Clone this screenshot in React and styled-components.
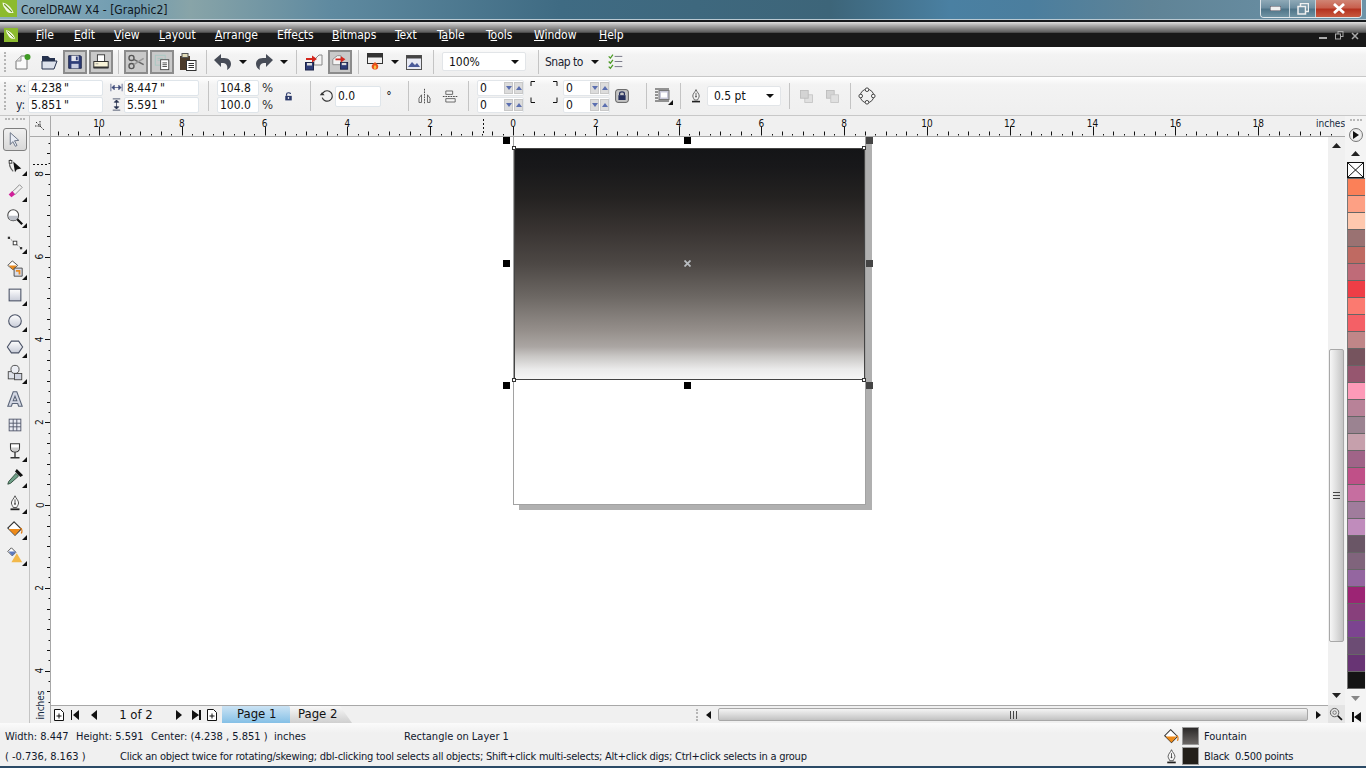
import React from "react";
import styled, { createGlobalStyle } from "styled-components";

const GlobalStyle = createGlobalStyle`
  html, body { margin: 0; padding: 0; background: #f0f0f0; overflow: hidden; }
  body { font-family: "DejaVu Sans Condensed", "DejaVu Sans", sans-serif; font-stretch: condensed; font-size: 11px; color: #111; }
`;

const Window = styled.div`
  width: 1366px;
  height: 768px;
  display: flex;
  flex-direction: column;
  overflow: hidden;
  background: #f0f0f0;
`;

const TitleBar = styled.div`
  height: 22px;
  flex: none;
  box-sizing: border-box;
  display: flex;
  align-items: flex-start;
  border-bottom: 2px solid #16191c;
  background: linear-gradient(90deg, #8fb0bd 0, #6f9bb0 130px, #88a4a8 190px, #5f8aa0 330px, #3f6b83 560px, #3d6579 830px, #4a80a2 950px, #4b7e9e 1030px, #5f8396 1150px, #6d93a8 1366px);
  box-shadow: inset 0 -1px 0 #b9c9d2;
`;

const TitleText = styled.span`
  font-size: 12px;
  line-height: 20px;
  margin-left: 4px;
  color: #10161c;
`;

const Caption = styled.div`
  margin-left: auto;
  margin-right: 4px;
  display: flex;
  height: 18px;
  border: 1px solid #dfe6ea;
  border-top: none;
  border-radius: 0 0 4px 4px;
  overflow: hidden;
  box-sizing: border-box;
`;

const CaptionBtn = styled.div`
  width: ${(p) => p.$w}px;
  box-sizing: border-box;
  display: flex;
  align-items: center;
  justify-content: center;
  border-left: ${(p) => (p.$first ? "none" : "1px solid #c4d2da")};
  background: ${(p) =>
    p.$close
      ? "linear-gradient(180deg, #d08474 0, #c8604e 45%, #b53320 55%, #c85a40 100%)"
      : "linear-gradient(180deg, #8fa9b7 0, #6d8ea0 45%, #4f7488 55%, #6f93a3 100%)"};
`;

const MenuBar = styled.div`
  height: 25px;
  flex: none;
  display: flex;
  align-items: center;
  padding: 0 0 0 4px;
  background: linear-gradient(180deg, #e0e0e0 0, #a6a6a6 4px, #5e5e5e 10px, #3a3a3a 11px, #181818 11.5px, #181818 100%);
`;

const MenuList = styled.div`
  display: flex;
  margin-left: 18px;
`;

const MenuItem = styled.span`
  flex: none;
  width: ${(p) => p.$w}px;
  color: #fff;
  font-size: 12px;
  line-height: 24px;
  u { text-underline-offset: 1px; }
`;

const DocControls = styled.div`
  margin-left: auto;
  margin-right: 6px;
  display: flex;
  gap: 7px;
  padding-top: 1px;
`;

const ToolbarRow = styled.div`
  flex: none;
  display: flex;
  align-items: center;
  box-sizing: border-box;
  height: ${(p) => p.$h}px;
  border-bottom: 1px solid #c8c8c8;
  background: linear-gradient(180deg, #ffffff 0, #f3f3f3 8px, #efefef 100%);
`;

const Grip = styled.div`
  flex: none;
  width: 2px;
  height: ${(p) => p.$h || 20}px;
  margin-left: 4px;
  border-left: 2px dotted #b5b5b5;
`;

const Tool = styled.div`
  flex: none;
  width: ${(p) => p.$w || 24}px;
  height: 24px;
  box-sizing: border-box;
  margin-left: ${(p) => p.$ml || 0}px;
  display: flex;
  align-items: center;
  justify-content: center;
  border: 2px solid ${(p) => (p.$on ? "#8c8c8c" : "transparent")};
  background: ${(p) => (p.$on ? "#c9c9c9" : "transparent")};
`;

const DropArrow = styled.div`
  flex: none;
  margin-left: ${(p) => p.$ml || 0}px;
  width: 0;
  height: 0;
  border-left: 4px solid transparent;
  border-right: 4px solid transparent;
  border-top: 4px solid #111;
`;

const Sep = styled.div`
  flex: none;
  width: 1px;
  height: ${(p) => p.$h || 24}px;
  margin-left: ${(p) => p.$l}px;
  margin-right: ${(p) => p.$r}px;
  background: #c4c4c4;
`;

const Combo = styled.div`
  flex: none;
  width: ${(p) => p.$w}px;
  height: ${(p) => p.$hh || 19}px;
  margin-left: ${(p) => p.$ml || 0}px;
  box-sizing: border-box;
  padding: 0 6px;
  display: flex;
  align-items: center;
  justify-content: space-between;
  background: #fff;
  border: 1px solid #e2e5e8;
  border-radius: 2px;
  font-size: 12px;
`;

const SnapLabel = styled.span`
  font-size: 12px;
  letter-spacing: -0.5px;
  color: #1a2230;
`;

const Stack = styled.div`
  flex: none;
  display: flex;
  flex-direction: column;
  gap: 1px;
  margin-left: ${(p) => p.$ml || 0}px;
`;

const Labeled = styled.div`
  display: flex;
  align-items: center;
  height: 16px;
`;

const AxisLabel = styled.span`
  width: ${(p) => p.$w}px;
  font-size: 12px;
  color: #1b2b44;
`;

const Field = styled.div`
  flex: none;
  width: ${(p) => p.$w}px;
  height: ${(p) => p.$hh || 16}px;
  box-sizing: border-box;
  padding-left: 2px;
  background: #fff;
  border: 1px solid #dfe5ea;
  border-radius: 2px;
  font-size: 12px;
  line-height: ${(p) => (p.$hh || 16) - 2}px;
  color: #111;
`;

const SpinField = styled.div`
  width: 47px;
  height: 16px;
  box-sizing: border-box;
  display: flex;
  align-items: center;
  padding-left: 2px;
  background: #fff;
  border: 1px solid #e2e6ea;
  border-radius: 2px;
  font-size: 12px;
`;

const SpinValue = styled.span`
  flex: 1;
`;

const Spin = styled.span`
  width: 9px;
  height: 12px;
  margin-left: 1px;
  display: flex;
  align-items: center;
  justify-content: center;
  background: #dcdcdc;
  border: 1px solid #c8c8c8;
  box-sizing: border-box;
`;

const Tri = styled.span`
  width: 0;
  height: 0;
  border-left: 3px solid transparent;
  border-right: 3px solid transparent;
  ${(p) => (p.$up ? "border-bottom: 4px solid #5b6fb0;" : "border-top: 4px solid #5b6fb0;")}
`;

const PercentStack = styled.div`
  flex: none;
  display: flex;
  flex-direction: column;
  gap: 1px;
  margin-left: 3px;
  width: 12px;
  font-size: 13px;
  line-height: 16px;
  color: #333;
`;

const Slot = styled.div`
  flex: none;
  width: ${(p) => p.$w}px;
  margin-left: ${(p) => p.$ml || 0}px;
  display: flex;
  align-items: center;
  justify-content: center;
  font-size: 12px;
`;

const Workspace = styled.div`
  flex: 1;
  min-height: 0;
  display: grid;
  grid-template-columns: 30px 21px 1277px 17px 21px;
  grid-template-rows: 21px 568px 18px;
`;

const Toolbox = styled.div`
  grid-column: 1;
  grid-row: 1 / 4;
  display: flex;
  flex-direction: column;
  align-items: center;
  border-right: 1px solid #c4c4c4;
  background: #f0f0f0;
`;

const ToolGrip = styled.div`
  width: 20px;
  height: 2px;
  margin: 2px 0 6px;
  border-top: 2px dotted #b8b8b8;
`;

const ToolSlot = styled.div`
  position: relative;
  width: 24px;
  height: ${(p) => (p.$on ? 23 : 26)}px;
  flex: none;
  box-sizing: border-box;
  display: flex;
  align-items: center;
  justify-content: center;
  margin-bottom: ${(p) => (p.$on ? 1 : 0)}px;
  border: ${(p) => (p.$on ? "1px solid #7f7f7f" : "none")};
  border-radius: 3px;
  background: ${(p) => (p.$on ? "linear-gradient(180deg, #f0f0f0, #d8d8d8)" : "none")};
  ${(p) =>
    p.$more &&
    `&::after {
      content: "";
      position: absolute;
      right: 0;
      bottom: 2px;
      border-left: 5px solid transparent;
      border-bottom: 5px solid #111;
    }`}
`;

const RulerCorner = styled.div`
  grid-column: 2;
  grid-row: 1;
  display: flex;
  align-items: flex-end;
  justify-content: flex-end;
  padding: 0 2px 2px 0;
  border-right: 1px solid #aaa;
  border-bottom: 1px solid #aaa;
  box-sizing: border-box;
  background: #f0f0f0;
`;

const HRuler = styled.div`
  grid-column: 3 / 5;
  grid-row: 1;
  background: #f0f0f0;
  overflow: hidden;
  svg { display: block; }
`;

const VRuler = styled.div`
  grid-column: 2;
  grid-row: 2 / 4;
  background: #f0f0f0;
  overflow: hidden;
  svg { display: block; }
`;

const Canvas = styled.div`
  grid-column: 3;
  grid-row: 2;
  position: relative;
  overflow: hidden;
  background: #fff;
`;

const Page = styled.div`
  position: absolute;
  left: 462px;
  top: -100px;
  width: 353px;
  height: 468px;
  box-sizing: border-box;
  background: #fff;
  border: 1px solid #a2a2a2;
  box-shadow: 6px 5px 0 #b0b0b0;
`;

const Shape = styled.div`
  position: absolute;
  left: 463px;
  top: 11px;
  width: 351px;
  height: 232px;
  box-sizing: border-box;
  border: 1px solid #444;
  background: linear-gradient(180deg, #141517 0, #18181a 8%, #242221 21%, #383331 35%, #4d4845 50%, #6c6763 64%, #958f8b 79%, #aba6a3 86%, #c8c6c4 90%, #ececec 96%, #f6f6f6 100%);
`;

const Handle = styled.div`
  position: absolute;
  left: ${(p) => p.$x}px;
  top: ${(p) => p.$y}px;
  width: 7px;
  height: 7px;
  background: ${(p) => (p.$dim ? "#454545" : "#000")};
`;

const Node = styled.div`
  position: absolute;
  left: ${(p) => p.$x}px;
  top: ${(p) => p.$y}px;
  width: 2px;
  height: 2px;
  border: 1px solid #333;
  background: #fff;
`;

const CenterMark = styled.svg`
  position: absolute;
  left: 633px;
  top: 123px;
`;

const VScroll = styled.div`
  grid-column: 4;
  grid-row: 2;
  display: flex;
  flex-direction: column;
  align-items: center;
  background: #f0f0f0;
`;

const ScrollBtn = styled.div`
  flex: none;
  box-sizing: border-box;
  height: ${(p) => p.$h}px;
  padding-top: ${(p) => p.$pt}px;
  width: 100%;
  display: flex;
  align-items: flex-start;
  justify-content: center;
  svg { display: block; }
`;

const ThumbV = styled.div`
  flex: none;
  width: 15px;
  height: 293px;
  margin-right: 1px;
  box-sizing: border-box;
  display: flex;
  align-items: center;
  justify-content: center;
  border: 1px solid #a8a8a8;
  border-radius: 2px;
  background: linear-gradient(90deg, #f6f6f6, #e0e0e0 45%, #c4c4c4);
`;

const Palette = styled.div`
  grid-column: 5;
  grid-row: 1 / 4;
  display: flex;
  flex-direction: column;
  align-items: center;
  background: #f4f4f4;
`;

const PaletteGrip = styled.div`
  flex: none;
  width: 12px;
  height: 2px;
  margin: 3px 0 5px;
  border-top: 2px dotted #b8b8b8;
`;

const PlayBtn = styled.div`
  flex: none;
  width: 14px;
  height: 14px;
  margin-bottom: 3px;
  box-sizing: border-box;
  display: flex;
  align-items: center;
  justify-content: center;
  border: 1px solid #777;
  border-radius: 50%;
  background: radial-gradient(circle, #fff, #ddd);
`;

const PaletteArrow = styled.div`
  flex: none;
  height: ${(p) => p.$h}px;
  display: flex;
  align-items: center;
  justify-content: center;
`;

const NoColor = styled.div`
  flex: none;
  width: 17px;
  height: 16px;
  box-sizing: border-box;
  border: 1px solid #111;
  background: #fff;
  svg { display: block; }
`;

const Swatches = styled.div`
  flex: none;
  width: 18px;
  display: flex;
  flex-direction: column;
  border-top: 1px solid #666;
`;

const Swatch = styled.div`
  height: 16px;
  border-bottom: 1px solid #666;
  border-left: 1px solid #777;
  background: ${(p) => p.$c};
`;

const PageBar = styled.div`
  grid-column: 3;
  grid-row: 3;
  display: flex;
  align-items: center;
  border-top: 1px solid #a8a8a8;
  box-sizing: border-box;
  background: #f0f0f0;
`;

const NavIcon = styled.div`
  flex: none;
  width: ${(p) => p.$w}px;
  margin-left: ${(p) => p.$ml || 0}px;
  display: flex;
  align-items: center;
  justify-content: center;
`;

const PageCount = styled.span`
  flex: none;
  width: 64px;
  text-align: center;
  font-size: 13px;
`;

const PageTab = styled.div`
  flex: none;
  height: 17px;
  width: ${(p) => p.$w}px;
  margin-left: ${(p) => p.$ml || 0}px;
  box-sizing: border-box;
  padding-left: ${(p) => p.$pad}px;
  font-size: 13px;
  line-height: 16px;
  clip-path: polygon(0 0, calc(100% - 12px) 0, 100% 100%, 0 100%);
  background: ${(p) =>
    p.$active
      ? "linear-gradient(180deg, #cbe3f4, #85c0e6)"
      : "linear-gradient(180deg, #f8f8f8, #cfcfcf)"};
`;

const HScroll = styled.div`
  margin-left: auto;
  flex: none;
  width: 636px;
  height: 100%;
  display: flex;
  align-items: center;
`;

const ThumbH = styled.div`
  flex: none;
  width: 590px;
  height: 13px;
  margin-left: 2px;
  box-sizing: border-box;
  display: flex;
  align-items: center;
  justify-content: center;
  border: 1px solid #a8a8a8;
  border-radius: 2px;
  background: linear-gradient(180deg, #f4f4f4, #dcdcdc 50%, #c2c2c2);
`;

const ZoomCell = styled.div`
  grid-column: 4;
  grid-row: 3;
  display: flex;
  align-items: center;
  justify-content: center;
  padding-right: 2px;
  background: #e4e4e4;
`;

const StatusBar = styled.div`
  flex: none;
  height: 45px;
  box-sizing: border-box;
  display: flex;
  flex-direction: column;
  padding-top: 3px;
  border-bottom: 2px solid #2b4a66;
  background: linear-gradient(180deg, #fbfbfb, #f0f0f0 10px);
`;

const StatusRow = styled.div`
  height: 20px;
  display: flex;
  align-items: center;
  padding-left: 5px;
  font-size: 11px;
  color: #10182c;
`;

const StatusCell = styled.span`
  flex: none;
  width: ${(p) => p.$w}px;
  white-space: nowrap;
`;

const HintText = styled.span`
  white-space: nowrap;
  letter-spacing: -0.25px;
`;

const Legend = styled.div`
  margin-left: auto;
  width: 203px;
  display: flex;
  align-items: center;
  gap: 2px;
`;

const LegendSwatch = styled.div`
  flex: none;
  width: 17px;
  height: 18px;
  margin-right: 3px;
  box-sizing: border-box;
  border: 1px solid #9a9a9a;
  background: ${(p) => p.$bg};
`;

const LegendText = styled.span`
  white-space: pre;
  letter-spacing: ${(p) => p.$track || 0}px;
`;

const Svg = ({ size = 20, children }) => (
  <svg width={size} height={size} viewBox="0 0 20 20" style={{ flex: "none" }}>
    {children}
  </svg>
);

const logo = (
  <>
    <rect width="20" height="20" fill="#8cbb2e" />
    <path d="M3 3c5 1 10 5 13 12-4 1-7 0-9-3-2-3-4-5-4-9z" fill="#f4f8e4" />
    <path d="M5 5l9 9" stroke="#6a9a20" strokeWidth="1.4" />
  </>
);

const nib = (
  <>
    <path d="M10 2c-1 3-4 5-4 8 0 2 2 4 2 5h4c0-1 2-3 2-5 0-3-3-5-4-8z" fill="#f6f6f6" stroke="#444" />
    <path d="M10 6v5" stroke="#444" />
    <circle cx="10" cy="11" r="1" fill="#444" />
    <rect x="5" y="16" width="10" height="2" fill="#222" />
  </>
);

const bucket = (
  <>
    <path d="M9 2l8 8-7 7-8-8z" fill="#fff" stroke="#333" strokeWidth="1.2" />
    <path d="M3 10h13l-6 7z" fill="#ee8a18" />
    <path d="M16 9c2 1 2 4 1 6" stroke="#e07a10" strokeWidth="1.5" fill="none" />
  </>
);

const icons = {
  newDoc: (
    <>
      <path d="M3 9l5-5h6v13H3z" fill="#fafafa" stroke="#777" />
      <path d="M3 9h5V4" fill="#ddd" stroke="#999" />
      <circle cx="14.5" cy="5" r="3" fill="#3f9a24" />
    </>
  ),
  open: (
    <>
      <path d="M3 4h6l2 2h5v5H3z" fill="#26324e" />
      <path d="M3 9h15l-3 8H3z" fill="#dde2ec" stroke="#26324e" />
    </>
  ),
  save: (
    <>
      <path d="M3 3h13l1 1v13H3z" fill="#2e3d78" stroke="#1c2448" />
      <rect x="6" y="3" width="8" height="6" fill="#e6e6ee" />
      <rect x="6" y="12" width="8" height="5" fill="#c8cce0" />
      <rect x="11" y="4" width="2" height="4" fill="#2e3d78" />
    </>
  ),
  print: (
    <>
      <rect x="6" y="2" width="8" height="8" fill="#fff" stroke="#333" />
      <rect x="2" y="9.500" width="16" height="7" fill="#f8f3d8" stroke="#222" />
      <rect x="2" y="15" width="16" height="2" fill="#333" />
      <rect x="4" y="11.500" width="3" height="1" fill="#999" />
    </>
  ),
  cut: (
    <>
      <circle cx="5" cy="5.5" r="2.8" fill="none" stroke="#555" strokeWidth="1.5" />
      <circle cx="5" cy="14.5" r="2.8" fill="none" stroke="#555" strokeWidth="1.5" />
      <path d="M7.5 7l11 6" stroke="#666" strokeWidth="1.7" />
      <path d="M7.5 13l11-7" stroke="#999" strokeWidth="1.7" />
    </>
  ),
  copy: (
    <>
      <rect x="2.5" y="2.5" width="11" height="11" fill="none" stroke="#a6c8c2" />
      <path d="M5 6h6M5 8h5" stroke="#a6c8c2" />
      <rect x="8.5" y="7.5" width="9" height="11" fill="#fff" stroke="#444" />
      <path d="M10.500 11h5M10.500 13h5M10.500 15h5" stroke="#444" />
    </>
  ),
  paste: (
    <>
      <rect x="2" y="4" width="10" height="14" fill="#4a3a2a" />
      <rect x="4" y="1.500" width="6" height="4" fill="#e2dcb8" stroke="#555" />
      <rect x="8.500" y="8.500" width="9.500" height="10" fill="#fff" stroke="#333" />
      <path d="M10.500 11.500h5.500M10.500 13.500h5.500M10.500 15.500h5.500" stroke="#333" />
    </>
  ),
  undo: (
    <path d="M1 8l7-6v4h3c5 0 7 3 7 6 0 3-2 5-4 6 1-3 0-7-4-7H8v4z" fill="#474c57" />
  ),
  redo: (
    <path d="M19 8l-7-6v4H9c-5 0-7 3-7 6 0 3 2 5 4 6-1-3 0-7 4-7h2v4z" fill="#474c57" />
  ),
  importIcon: (
    <>
      <path d="M10 8l5-5h3v10h-8z" fill="#f4f4f4" stroke="#888" />
      <rect x="1.500" y="10.500" width="8" height="7.500" fill="#2e3d78" stroke="#1c2448" />
      <rect x="3" y="11" width="5" height="2.500" fill="#ddd" />
      <path d="M2 6h6V3.500L13 7l-5 3.500V8H2z" fill="#d4261c" />
    </>
  ),
  exportIcon: (
    <>
      <path d="M2 7l5-4h4v10H2z" fill="#f4f4f4" stroke="#888" />
      <rect x="10.500" y="10.500" width="8" height="7.500" fill="#2e3d78" stroke="#1c2448" />
      <rect x="12" y="11" width="5" height="2.500" fill="#ddd" />
      <path d="M5 6h6V3.500L16 7l-5 3.500V8H5z" fill="#d4261c" />
    </>
  ),
  publish: (
    <>
      <rect x="2.500" y="1.500" width="15" height="10" fill="#f0f0f0" stroke="#333" />
      <rect x="2.500" y="1.500" width="15" height="4" fill="#333" />
      <path d="M10 10c2 2 4 3 3 6-1 2-5 2-6 0-1-3 1-4 3-6z" fill="#e8501c" />
      <path d="M10 13c1 1 2 2 1 3.500-1 .8-2 .8-2 0-.5-1.500 0-2.500 1-3.500z" fill="#f8c040" />
    </>
  ),
  launcher: (
    <>
      <rect x="2.500" y="3.500" width="15" height="14" fill="#e8eaf4" stroke="#555" />
      <rect x="2.500" y="3.500" width="15" height="3" fill="#444" />
      <path d="M4 15l4-5 3 3 2-2 3 4z" fill="#4a5a9a" />
    </>
  ),
  snapList: (
    <>
      <path d="M2 4l2 2 3-4M2 10l2 2 3-4M2 16l2 2 3-4" stroke="#4a9a24" strokeWidth="1.500" fill="none" />
      <path d="M9 4h9M9 10h9M9 16h9" stroke="#667" />
    </>
  ),
  width: (
    <path d="M2.500 5v10M17.500 5v10M4 10h12M4 10l3-3v6zM16 10l-3-3v6z" stroke="#3d4a7a" fill="#3d4a7a" />
  ),
  height: (
    <path d="M5 2.500h10M5 17.500h10M10 4v12M10 4L7 7h6zM10 16l-3-3h6z" stroke="#26304e" fill="#26304e" />
  ),
  lockOpen: (
    <>
      <rect x="5" y="9" width="10" height="7" fill="#2c3a6a" />
      <path d="M7 9V6.500C7 3.500 13 3.500 13 6" stroke="#2c3a6a" strokeWidth="1.800" fill="none" />
      <rect x="9" y="11" width="2" height="2.500" fill="#fff" />
    </>
  ),
  rotate: (
    <>
      <path d="M5 6a6.500 6.500 0 1 1-1 6" stroke="#333" strokeWidth="1.500" fill="none" />
      <path d="M1 9h6l-3 -4z" fill="#333" />
    </>
  ),
  mirrorH: (
    <>
      <path d="M10 1v18" stroke="#333" strokeDasharray="2 1" />
      <path d="M3.500 12l3-4v9h-3zM13.500 8l3 4v5h-3z" fill="#f4f4f4" stroke="#555" />
    </>
  ),
  mirrorV: (
    <>
      <path d="M1 10h18" stroke="#333" strokeDasharray="2 1" />
      <path d="M4.500 3.500h8v4h-8zM4.500 12.500h11v4h-11z" fill="#f4f4f4" stroke="#555" />
    </>
  ),
  lockBox: (
    <>
      <rect x="2" y="2" width="16" height="16" rx="3" fill="#c4c4c4" stroke="#444" />
      <rect x="5.500" y="9" width="9" height="6" fill="#252f5c" />
      <path d="M7 9V7c0-3 6-3 6 0v2" stroke="#252f5c" strokeWidth="1.500" fill="none" />
    </>
  ),
  shadow: (
    <>
      <path d="M1 3h14M1 6h3M1 9h3M1 12h3M1 15h14" stroke="#333" />
      <rect x="5" y="4.500" width="10" height="9" fill="#c8c8d8" stroke="#777" />
      <rect x="7" y="6.500" width="6" height="5" fill="#fff" />
      <path d="M19 14v5h-5z" fill="#111" />
    </>
  ),
  pen: nib,
  toFront: (
    <>
      <rect x="8" y="8" width="9" height="9" fill="#e0e0e0" stroke="#c4c4c4" />
      <rect x="3" y="3" width="9" height="9" fill="#d4d4d4" stroke="#bbb" />
    </>
  ),
  toBack: (
    <>
      <rect x="3" y="3" width="9" height="9" fill="#d4d4d4" stroke="#bbb" />
      <rect x="8" y="8" width="9" height="9" fill="#e0e0e0" stroke="#c4c4c4" />
    </>
  ),
  nodes: (
    <>
      <circle cx="10" cy="10" r="7.500" fill="none" stroke="#333" />
      <circle cx="10" cy="3" r="2" fill="#fff" stroke="#333" />
      <circle cx="10" cy="17" r="2" fill="#fff" stroke="#333" />
      <circle cx="3" cy="10" r="2" fill="#fff" stroke="#333" />
      <circle cx="17" cy="10" r="2" fill="#fff" stroke="#333" />
    </>
  ),
  pick: <path d="M5 2l10 9-5 .5 3 5.500-2 1-3-5.500L5 16z" fill="#e8ecf4" stroke="#5a6478" />,
  shape: (
    <>
      <path d="M5 4c-2 4-1 9 3 13" stroke="#666" fill="none" strokeWidth="1.300" />
      <rect x="3.500" y="5" width="3" height="3" fill="#fff" stroke="#333" />
      <path d="M8 6l9 8-5 1-2 3z" fill="#111" />
    </>
  ),
  smudge: (
    <>
      <path d="M7 11l8-8 3 3-8 8z" fill="#f2f2f2" stroke="#888" />
      <path d="M3 14l4-4 3 4-4 3z" fill="#d0209a" />
      <path d="M9 9l5-5" stroke="#aaa" />
    </>
  ),
  zoom: (
    <>
      <circle cx="8" cy="8" r="6" fill="#fff" stroke="#444" strokeWidth="1.200" />
      <path d="M2.500 8.500h11a5.500 5.500 0 0 1-11 0z" fill="#bcc0c8" />
      <path d="M12.500 12.500l5.500 5.500" stroke="#111" strokeWidth="2.500" />
    </>
  ),
  curve: (
    <>
      <path d="M3 4l14 12" stroke="#888" strokeDasharray="2 1" />
      <rect x="2" y="3" width="2.500" height="2.500" fill="#333" />
      <rect x="8" y="8" width="4" height="4" fill="#fff" stroke="#333" />
      <rect x="15.500" y="14.500" width="2.500" height="2.500" fill="#333" />
    </>
  ),
  smart: (
    <>
      <path d="M7 1l6 5-5 5-6-5z" fill="#fff" stroke="#444" />
      <path d="M3 6h9l-4 5z" fill="#e88a20" />
      <path d="M9 9h9v9H9z" fill="#d8dce8" stroke="#444" />
      <path d="M11 12h4v4" fill="none" stroke="#e88a20" strokeWidth="2" />
    </>
  ),
  rect: (
    <rect x="3.500" y="3.500" width="13" height="13" fill="url(#shapeFill)" stroke="#4a5266" strokeWidth="1.200" />
  ),
  ellipse: <circle cx="10" cy="10" r="7" fill="url(#shapeFill)" stroke="#4a5266" strokeWidth="1.200" />,
  polygon: (
    <path d="M6 3.500h8l4.500 6.500-4.500 6.500H6L1.500 10z" fill="url(#shapeFill)" stroke="#4a5266" strokeWidth="1.200" />
  ),
  shapes: (
    <>
      <rect x="2.500" y="8.500" width="9" height="8" fill="#dfe2ea" stroke="#444" />
      <circle cx="10" cy="6" r="4.500" fill="#eceef4" stroke="#444" />
      <rect x="9.500" y="10.500" width="8" height="7" fill="#d0d4e0" stroke="#444" />
    </>
  ),
  text: (
    <path d="M8 2h4l6 16h-4l-1-3H7l-1 3H2zM10 7l-2 5h4z" fill="#d4d8e4" stroke="#5a6478" strokeWidth="1.200" fillRule="evenodd" />
  ),
  table: (
    <>
      <rect x="3.500" y="3.500" width="13" height="13" fill="#e8eaf2" stroke="#50566a" />
      <path d="M3.500 8h13M3.500 12h13M8 3.500v13M12 3.500v13" stroke="#50566a" />
    </>
  ),
  goblet: (
    <>
      <path d="M5 2h10v4c0 3-2 5-5 5s-5-2-5-5z" fill="#fff" stroke="#333" strokeWidth="1.200" />
      <path d="M5.500 6h9c0 3-2 4.500-4.500 4.500S5.500 9 5.500 6z" fill="#ccc" />
      <path d="M10 11v6M5 17.500h10" stroke="#333" strokeWidth="1.500" />
    </>
  ),
  dropper: (
    <>
      <path d="M12 1l7 7-3 2-6-6z" fill="#111" />
      <path d="M11 6l3 3-9 8-3 1 1-3z" fill="#70a088" stroke="#2c4a3a" />
    </>
  ),
  fill: bucket,
  interactive: (
    <>
      <path d="M6 2l5 5-4 4-5-5z" fill="#fff" stroke="#444" />
      <path d="M3 6h8l-4 5z" fill="#5a78c0" />
      <path d="M12 8l-6 10h12z" fill="#f2b84a" />
    </>
  ),
};

const toolList = [
  ["shape", true],
  ["smudge", true],
  ["zoom", true],
  ["curve", true],
  ["smart", true],
  ["rect", true],
  ["ellipse", true],
  ["polygon", true],
  ["shapes", true],
  ["text", false],
  ["table", false],
  ["goblet", true],
  ["dropper", true],
  ["pen", true],
  ["fill", true],
  ["interactive", true],
];

// widths keep each title at the spot the app draws it
const menus = [
  [38, "F", "ile"],
  [40, "E", "dit"],
  [45, "V", "iew"],
  [56, "L", "ayout"],
  [62, "A", "rrange"],
  [55, "Effe", "c", "ts"],
  [63, "B", "itmaps"],
  [42, "T", "ext"],
  [49, "T", "a", "ble"],
  [48, "T", "o", "ols"],
  [65, "W", "indow"],
  [30, "H", "elp"],
];

const paletteColors = [
  "#fb8058", "#fda084", "#fec8ae", "#9a7272", "#bf6a62", "#bf6b78", "#ee3e46", "#fb7a70",
  "#f46066", "#c08688", "#76545e", "#96566f", "#fd9ab8", "#b88298", "#9b8391", "#c6a0ac",
  "#a06488", "#c05088", "#c66ea0", "#a07c9c", "#c08cbc", "#6a5666", "#80647c", "#9466a0",
  "#9c2474", "#88407c", "#7c4490", "#6c4c74", "#683474", "#141414",
];

const INCH = 41.4;
const STEP = INCH / 4;
const RULER_FONT = "DejaVu Sans Condensed, DejaVu Sans, sans-serif";

const TopRuler = () => {
  const origin = 513 - 51;
  const ticks = [];
  for (let i = -45; i < 80; i++) {
    const x = Math.round(origin + i * STEP) + 0.5;
    if (x < 0 || x > 1293) continue;
    const major = i % 8 === 0;
    const mid = i % 2 === 0;
    const len = major ? 9 : mid ? 4 : 1.5;
    ticks.push(<line key={i} x1={x} x2={x} y1={19.5 - len} y2={19.5} stroke="#111" />);
  }
  const labels = [];
  for (let n = -10; n <= 18; n += 2) {
    labels.push(
      <text key={n} x={origin + n * INCH} y={10.5} fontSize="10" textAnchor="middle" fill="#111" fontFamily={RULER_FONT}>
        {Math.abs(n)}
      </text>
    );
  }
  return (
    <svg width="1294" height="21">
      {ticks}
      {labels}
      <path d="M432.500 3v16" stroke="#111" strokeDasharray="2 2" />
      <rect x="1262" y="2" width="32" height="11" fill="#f0f0f0" />
      <text x="1265" y="11" fontSize="10" fill="#142840" fontFamily={RULER_FONT}>inches</text>
      <line x1="0" x2="1294" y1="20.500" y2="20.500" stroke="#a8a8a8" />
    </svg>
  );
};

const LeftRuler = () => {
  const origin = 505 - 137;
  const ticks = [];
  for (let i = -40; i < 30; i++) {
    const y = Math.round(origin + i * STEP) + 0.5;
    if (y < 0 || y > 572) continue;
    const major = i % 8 === 0;
    const mid = i % 2 === 0;
    const len = major ? 5 : mid ? 3 : 1.5;
    ticks.push(<line key={i} x1={20 - len} x2={20} y1={y} y2={y} stroke="#111" />);
  }
  const labels = [];
  for (let n = -4; n <= 8; n += 2) {
    const y = origin - n * INCH;
    labels.push(
      <text key={n} x={13.5} y={y} fontSize="10" textAnchor="middle" fill="#111" transform={`rotate(-90 13.5 ${y})`} fontFamily={RULER_FONT}>
        {Math.abs(n)}
      </text>
    );
  }
  return (
    <svg width="21" height="586">
      {ticks}
      {labels}
      <path d="M3 27.500h16" stroke="#111" strokeDasharray="2 2" />
      <text x={13.5} y={568} fontSize="10" textAnchor="middle" fill="#142840" transform="rotate(-90 13.5 568)" fontFamily={RULER_FONT}>inches</text>
      <line x1="20.500" x2="20.500" y1="0" y2="586" stroke="#a8a8a8" />
    </svg>
  );
};

const Up = ({ color = "#222" }) => (
  <svg width="9" height="5"><path d="M4.500 0L9 5H0z" fill={color} /></svg>
);
const Down = ({ color = "#222" }) => (
  <svg width="9" height="5"><path d="M0 0h9L4.500 5z" fill={color} /></svg>
);

const Nav = ({ d }) => (
  <svg width="12" height="12" viewBox="0 0 12 12"><path d={d} fill="#111" /></svg>
);

const AddPage = () => (
  <svg width="12" height="14" viewBox="0 0 12 14">
    <path d="M1.500 1.500h6l3 3v8h-9z" fill="#fff" stroke="#111" />
    <path d="M3.500 8h5M6 5.500v5" stroke="#111" />
  </svg>
);

const handles = [
  [452, 0], [633, 0], [815, 0, true],
  [452, 123], [815, 123, true],
  [452, 245], [633, 245], [815, 245, true],
];

const nodes = [[461, 9], [811, 9], [461, 241], [811, 241]];

const Spinner = ({ value }) => (
  <SpinField>
    <SpinValue>{value}</SpinValue>
    <Spin><Tri /></Spin>
    <Spin><Tri $up /></Spin>
  </SpinField>
);

const App = () => {
  return (
    <Window>
      <GlobalStyle />
      <TitleBar>
        <Svg size={17}>{logo}</Svg>
        <TitleText>CorelDRAW X4 - [Graphic2]</TitleText>
        <Caption>
          <CaptionBtn $w={28} $first>
            <svg width="11" height="5"><rect width="11" height="5" fill="#f0f0f0" stroke="#445" /></svg>
          </CaptionBtn>
          <CaptionBtn $w={26}>
            <svg width="12" height="12"><rect x="3.500" y=".5" width="8" height="8" fill="none" stroke="#f0f0f0" strokeWidth="1.500" /><rect x="1" y="3.500" width="7.500" height="7.500" fill="#6d8ea0" stroke="#f0f0f0" strokeWidth="1.500" /></svg>
          </CaptionBtn>
          <CaptionBtn $w={46} $close>
            <svg width="12" height="11"><path d="M1 1l10 9M11 1L1 10" stroke="#fff" strokeWidth="2.800" /></svg>
          </CaptionBtn>
        </Caption>
      </TitleBar>

      <MenuBar>
        <Svg size={14}>{logo}</Svg>
        <MenuList>
          {menus.map(([w, ...m], i) =>
            m.length === 2 ? (
              <MenuItem key={i} $w={w}><u>{m[0]}</u>{m[1]}</MenuItem>
            ) : (
              <MenuItem key={i} $w={w}>{m[0]}<u>{m[1]}</u>{m[2]}</MenuItem>
            )
          )}
        </MenuList>
        <DocControls>
          <svg width="9" height="9"><rect y="6" width="8" height="2" fill="#aaa" /></svg>
          <svg width="9" height="9"><rect x="3" y=".5" width="5" height="5" fill="none" stroke="#aaa" /><rect x=".5" y="3" width="5" height="5" fill="#181818" stroke="#aaa" /></svg>
          <svg width="9" height="9"><path d="M1 2l6 6M7 2L1 8" stroke="#aaa" strokeWidth="1.500" /></svg>
        </DocControls>
      </MenuBar>

      <ToolbarRow $h={30}>
        <Grip />
        <Tool $ml={3}><Svg>{icons.newDoc}</Svg></Tool>
        <Tool $ml={2}><Svg>{icons.open}</Svg></Tool>
        <Tool $ml={2} $on><Svg size={18}>{icons.save}</Svg></Tool>
        <Tool $ml={2} $on><Svg size={18}>{icons.print}</Svg></Tool>
        <Sep $l={5} $r={5} />
        <Tool $on><Svg size={18}>{icons.cut}</Svg></Tool>
        <Tool $ml={2} $on><Svg size={18}>{icons.copy}</Svg></Tool>
        <Tool $ml={2}><Svg>{icons.paste}</Svg></Tool>
        <Sep $l={6} $r={4} />
        <Tool><Svg>{icons.undo}</Svg></Tool>
        <DropArrow $ml={4} />
        <Tool $ml={5}><Svg>{icons.redo}</Svg></Tool>
        <DropArrow $ml={4} />
        <Sep $l={8} $r={5} />
        <Tool><Svg>{icons.importIcon}</Svg></Tool>
        <Tool $ml={2} $on><Svg size={18}>{icons.exportIcon}</Svg></Tool>
        <Sep $l={6} $r={4} />
        <Tool><Svg>{icons.publish}</Svg></Tool>
        <DropArrow $ml={4} />
        <Tool $ml={3}><Svg>{icons.launcher}</Svg></Tool>
        <Sep $l={7} $r={8} />
        <Combo $w={84}>100%<DropArrow /></Combo>
        <Sep $l={12} $r={6} />
        <SnapLabel>Snap to</SnapLabel>
        <DropArrow $ml={8} />
        <Tool $ml={5}><Svg size={17}>{icons.snapList}</Svg></Tool>
      </ToolbarRow>

      <ToolbarRow $h={39}>
        <Grip $h={28} />
        <Stack $ml={8}>
          <Labeled><AxisLabel $w={12}>x:</AxisLabel><Field $w={75}>4.238{"\u2009"}"</Field></Labeled>
          <Labeled><AxisLabel $w={12}>y:</AxisLabel><Field $w={75}>5.851{"\u2009"}"</Field></Labeled>
        </Stack>
        <Stack $ml={5}>
          <Labeled><Slot $w={16}><Svg size={15}>{icons.width}</Svg></Slot><Field $w={75}>8.447{"\u2009"}"</Field></Labeled>
          <Labeled><Slot $w={16}><Svg size={15}>{icons.height}</Svg></Slot><Field $w={75}>5.591{"\u2009"}"</Field></Labeled>
        </Stack>
        <Sep $l={9} $r={8} $h={30} />
        <Stack>
          <Field $w={42}>104.8</Field>
          <Field $w={42}>100.0</Field>
        </Stack>
        <PercentStack><span>%</span><span>%</span></PercentStack>
        <Slot $w={14} $ml={7}><Svg size={13}>{icons.lockOpen}</Svg></Slot>
        <Sep $l={15} $r={8} $h={30} />
        <Svg size={16}>{icons.rotate}</Svg>
        <Field $w={46} $hh={21}>0.0</Field>
        <Slot $w={12} $ml={2}>°</Slot>
        <Sep $l={13} $r={7} $h={30} />
        <Svg size={17}>{icons.mirrorH}</Svg>
        <Slot $w={17} $ml={9}><Svg size={17}>{icons.mirrorV}</Svg></Slot>
        <Sep $l={9} $r={8} $h={30} />
        <Stack>
          <Spinner value="0" />
          <Spinner value="0" />
        </Stack>
        <Slot $w={39}>
          <svg width="28" height="30" viewBox="0 0 28 30">
            <path d="M1 5V.5h4M23 .5h4V5M1 16.500v5h4M27 16.500v5h-4" stroke="#111" fill="none" />
          </svg>
        </Slot>
        <Stack>
          <Spinner value="0" />
          <Spinner value="0" />
        </Stack>
        <Slot $w={16} $ml={4}><Svg size={16}>{icons.lockBox}</Svg></Slot>
        <Sep $l={16} $r={7} $h={26} />
        <Svg>{icons.shadow}</Svg>
        <Sep $l={6} $r={7} $h={26} />
        <Svg size={16}>{icons.pen}</Svg>
        <Combo $w={74} $hh={20} $ml={3}>0.5 pt<DropArrow /></Combo>
        <Sep $l={8} $r={8} $h={26} />
        <Svg size={17}>{icons.toFront}</Svg>
        <Slot $w={17} $ml={9}><Svg size={17}>{icons.toBack}</Svg></Slot>
        <Sep $l={9} $r={7} $h={26} />
        <Svg size={18}>{icons.nodes}</Svg>
      </ToolbarRow>

      <Workspace>
        <svg width="0" height="0" style={{ position: "absolute" }}>
          <defs>
            <linearGradient id="shapeFill" x1="0" y1="0" x2="0" y2="1">
              <stop offset="0" stopColor="#fff" />
              <stop offset="1" stopColor="#c8ccd8" />
            </linearGradient>
          </defs>
        </svg>
        <Toolbox>
          <ToolGrip />
          <ToolSlot $on><Svg size={17}>{icons.pick}</Svg></ToolSlot>
          {toolList.map(([name, more]) => (
            <ToolSlot key={name} $more={more}><Svg size={18}>{icons[name]}</Svg></ToolSlot>
          ))}
        </Toolbox>

        <RulerCorner>
          <svg width="14" height="14" viewBox="0 0 14 14">
            <path d="M2 2l8 8M6 1v6M1 6h6" stroke="#333" strokeDasharray="1.500 1" fill="none" />
          </svg>
        </RulerCorner>
        <HRuler><TopRuler /></HRuler>
        <VRuler><LeftRuler /></VRuler>

        <Canvas>
          <Page />
          <Shape />
          {handles.map(([x, y, dim], i) => (
            <Handle key={i} $x={x} $y={y} $dim={dim} />
          ))}
          {nodes.map(([x, y], i) => (
            <Node key={i} $x={x} $y={y} />
          ))}
          <CenterMark width="7" height="7" viewBox="0 0 7 7">
            <path d="M.5 .5l6 6M6.500 .5l-6 6" stroke="#b8bcc0" strokeWidth="1.800" />
          </CenterMark>
        </Canvas>

        <VScroll>
          <ScrollBtn $h={212} $pt={6}><Up /></ScrollBtn>
          <ThumbV>
            <svg width="9" height="7"><path d="M1 .5h7M1 3.500h7M1 6.500h7" stroke="#444" /></svg>
          </ThumbV>
          <ScrollBtn $h={63} $pt={51}><Down /></ScrollBtn>
        </VScroll>

        <Palette>
          <PaletteGrip />
          <PlayBtn>
            <svg width="7" height="8"><path d="M1 0l6 4-6 4z" fill="#111" /></svg>
          </PlayBtn>
          <PaletteArrow $h={17}><Up /></PaletteArrow>
          <NoColor>
            <svg width="15" height="14"><path d="M0 0l15 14M15 0L0 14" stroke="#111" /></svg>
          </NoColor>
          <Swatches>
            {paletteColors.map((c, i) => (
              <Swatch key={i} $c={c} />
            ))}
          </Swatches>
          <PaletteArrow $h={19}><Down color="#888" /></PaletteArrow>
          <PaletteArrow $h={17}><Nav d="M2 1h2v10H2zM11 1v10L4 6z" /></PaletteArrow>
        </Palette>

        <PageBar>
          <NavIcon $w={15}><AddPage /></NavIcon>
          <NavIcon $w={17}><Nav d="M2 1h1v10H2zM10 1v10L4 6z" /></NavIcon>
          <NavIcon $w={21}><Nav d="M9 1v10L3 6z" /></NavIcon>
          <PageCount>1 of 2</PageCount>
          <NavIcon $w={21}><Nav d="M3 1v10l6-5z" /></NavIcon>
          <NavIcon $w={13}><Nav d="M2 1v10l7-5zM9 1h2v10H9z" /></NavIcon>
          <NavIcon $w={20}><AddPage /></NavIcon>
          <PageTab $active $w={79} $pad={15}>Page 1</PageTab>
          <PageTab $w={62} $pad={8} $ml={-11}>Page 2</PageTab>
          <HScroll>
            <Grip $h={12} />
            <NavIcon $w={16}>
              <svg width="5" height="8"><path d="M5 0v8L0 4z" fill="#111" /></svg>
            </NavIcon>
            <ThumbH>
              <svg width="7" height="8"><path d="M.5 0v8M3.500 0v8M6.500 0v8" stroke="#444" /></svg>
            </ThumbH>
            <NavIcon $w={16} $ml={2}>
              <svg width="5" height="8"><path d="M0 0v8l5-4z" fill="#111" /></svg>
            </NavIcon>
          </HScroll>
        </PageBar>
        <ZoomCell>
          <Svg size={14}>
            <circle cx="8" cy="8" r="6" fill="none" stroke="#555" strokeWidth="1.300" />
            <circle cx="8" cy="8" r="2.500" fill="none" stroke="#555" />
            <path d="M12.500 12.500l6 6" stroke="#111" strokeWidth="2.500" />
          </Svg>
        </ZoomCell>
      </Workspace>

      <StatusBar>
        <StatusRow>
          <StatusCell $w={71}>Width: 8.447</StatusCell>
          <StatusCell $w={75}>Height: 5.591</StatusCell>
          <StatusCell $w={123}>Center: (4.238 , 5.851 )</StatusCell>
          <StatusCell $w={130}>inches</StatusCell>
          <span>Rectangle on Layer 1</span>
          <Legend>
            <Svg size={17}>{bucket}</Svg>
            <LegendSwatch $bg="linear-gradient(180deg, #2c2a29, #6a6664)" />
            <LegendText>Fountain</LegendText>
          </Legend>
        </StatusRow>
        <StatusRow>
          <StatusCell $w={115}>( -0.736, 8.163 )</StatusCell>
          <HintText>Click an object twice for rotating/skewing; dbl-clicking tool selects all objects; Shift+click multi-selects; Alt+click digs; Ctrl+click selects in a group</HintText>
          <Legend>
            <Svg size={17}>{nib}</Svg>
            <LegendSwatch $bg="#231f1a" />
            <LegendText $track={-0.3}>Black  0.500 points</LegendText>
          </Legend>
        </StatusRow>
      </StatusBar>
    </Window>
  );
};

export default App;
